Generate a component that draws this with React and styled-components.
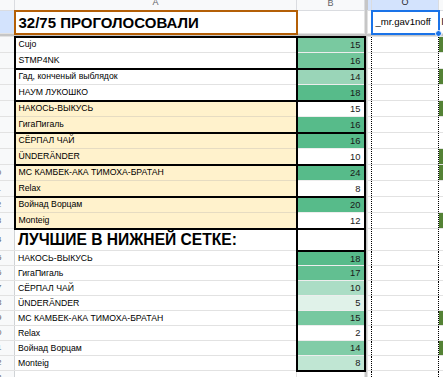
import React from 'react';
import styled, { createGlobalStyle, css } from 'styled-components';

const GlobalStyle = createGlobalStyle`
  html, body {
    margin: 0;
    padding: 0;
    background: #fff;
    overflow: hidden;
  }
  body {
    font-family: "Liberation Sans", Arial, sans-serif;
  }
`;

const GREEN = '#57bb8a';
const YELLOW = '#fff2cc';
const GRID = '#e2e2e2';
const THICK = '2px solid #000';

const Viewport = styled.div`
  width: 443px;
  height: 377px;
  overflow: hidden;
`;

// the sheet is cropped: row numbers and column letters are cut at the edges
const Sheet = styled.table`
  border-collapse: collapse;
  table-layout: fixed;
  width: 519px;
  margin: -5px 0 0 -21px;
  font-family: "Liberation Sans", Arial, sans-serif;
  font-size: 8.7px;
  color: #000;
`;

const Row = styled.tr`
  height: ${p => p.$h}px;
`;

const Cell = styled.td`
  padding: 0;
  border: 1px solid ${GRID};
  white-space: nowrap;
  overflow: hidden;
  line-height: 1;
`;

const ColHead = styled(Cell)`
  background: ${p => (p.$active ? '#d3e3fd' : '#f8f9fa')};
  color: ${p => (p.$active ? '#1f1f1f' : '#5f6368')};
  font-size: 9px;
  text-align: center;
  border-color: #dadce0;
  ${p => p.$active && css`border-left: none;`}
`;

const RowHead = styled(Cell)`
  background: ${p => (p.$active ? '#d3e3fd' : '#f8f9fa')};
  color: #5f6368;
  font-size: 8px;
  text-align: center;
  border-right-color: #d0d3d6;
`;

const FrozenV = styled.td`
  padding: 0;
  border: none;
  background: #c6c6c6;
`;

const FrozenH = styled.td`
  padding: 0;
  border: none;
  background: #c6c6c6;
`;

const TitleCell = styled(Cell)`
  padding: 0 3px;
  font-size: 15px;
  font-weight: 700;
  border: 2px solid #b45f06;
`;

const NameCell = styled(Cell)`
  padding: 0 3px;
  background: ${p => p.$fill || '#fff'};
  font-size: ${p => (p.$heading ? '15.6px' : '8.7px')};
  font-weight: ${p => (p.$heading ? 700 : 400)};
  ${p => p.$fill === YELLOW && css`border-color: #e6dcc2;`}
  ${p => p.$boxed && css`
    border-left: ${THICK};
    border-right: ${THICK};
  `}
  ${p => p.$top && css`border-top: ${THICK};`}
  ${p => p.$bottom && css`border-bottom: ${THICK};`}
`;

const ValueCell = styled(Cell)`
  padding: 0 3px 0 0;
  text-align: right;
  font-size: 9.4px;
  color: #1a1a1a;
  background: ${p => p.$fill || '#fff'};
  border-color: rgba(0, 0, 0, 0.07);
  border-left: ${THICK};
  border-right: ${THICK};
  ${p => p.$top && css`border-top: ${THICK};`}
  ${p => p.$bottom && css`border-bottom: ${THICK};`}
`;

const GapCell = styled(Cell)`
  border-right: none;
`;

const UserCell = styled(Cell)`
  border-left: 1px dotted #000;
  border-right: 1px dotted #000;
`;

const SelectedCell = styled(Cell)`
  position: relative;
  overflow: visible;
  padding: 0 3px;
  font-size: 9.6px;
  border: 2px solid #1a73e8;
`;

const FillHandle = styled.span`
  position: absolute;
  right: -4px;
  bottom: -4px;
  width: 5px;
  height: 5px;
  border-radius: 50%;
  background: #1a73e8;
  border: 1px solid #fff;
  z-index: 2;
`;

const MarkCell = styled(Cell)`
  border-left: none;
  padding: 0 2px;
  font-size: 9.6px;
  background: ${p => (p.$mark ? '#548235' : '#fff')};
`;

const topGroups = [
  {
    fill: '#fff',
    rows: [
      { name: 'Cujo', value: 15, color: '#79c9a0' },
      { name: 'STMP4NK', value: 16, color: '#72c69b' },
    ],
  },
  {
    fill: '#fff',
    rows: [
      { name: 'Гад, конченый выблядок', value: 14, color: '#9ad5b8' },
      { name: 'НАУМ ЛУКОШКО', value: 18, color: GREEN },
    ],
  },
  {
    fill: YELLOW,
    rows: [
      { name: 'НАКОСЬ-ВЫКУСЬ', value: 15, color: '#fff' },
      { name: 'ГигаПигаль', value: 16, color: GREEN },
    ],
  },
  {
    fill: YELLOW,
    rows: [
      { name: 'СЁРПАЛ ЧАЙ', value: 16, color: GREEN },
      { name: 'ÜNDERÄNDER', value: 10, color: '#fff' },
    ],
  },
  {
    fill: YELLOW,
    rows: [
      { name: 'MC КАМБЕК-АКА ТИМОХА-БРАТАН', value: 24, color: GREEN },
      { name: 'Relax', value: 8, color: '#fff' },
    ],
  },
  {
    fill: YELLOW,
    rows: [
      { name: 'Войнад Ворцам', value: 20, color: GREEN },
      { name: 'Monteig', value: 12, color: '#fff' },
    ],
  },
];

const lowerBracket = [
  { name: 'НАКОСЬ-ВЫКУСЬ', value: 18 },
  { name: 'ГигаПигаль', value: 17 },
  { name: 'СЁРПАЛ ЧАЙ', value: 10 },
  { name: 'ÜNDERÄNDER', value: 5 },
  { name: 'MC КАМБЕК-АКА ТИМОХА-БРАТАН', value: 15 },
  { name: 'Relax', value: 2 },
  { name: 'Войнад Ворцам', value: 14 },
  { name: 'Monteig', value: 8 },
];

const markedRows = [2, 4, 6, 9, 10, 13, 19, 21];

// white -> green colour scale, as the sheet's conditional format does
const scale = (v, min, max) => {
  const t = (v - min) / (max - min);
  const mix = (a, b) => Math.round(a + (b - a) * t);
  return `rgb(${mix(255, 87)}, ${mix(255, 187)}, ${mix(255, 138)})`;
};

const RightPane = ({ row }) => (
  <>
    <FrozenV />
    <GapCell />
    <UserCell />
    <MarkCell $mark={markedRows.includes(row)} />
  </>
);

const App = () => {
  let rowNo = 1;
  const upper = topGroups.flatMap(group =>
    group.rows.map((r, ri) => {
      rowNo += 1;
      const n = rowNo;
      return (
        <Row $h={16} key={`u${n}`}>
          <RowHead>{n}</RowHead>
          <NameCell $fill={group.fill} $boxed $top={ri === 0} $bottom={ri === 1}>
            {r.name}
          </NameCell>
          <ValueCell $fill={r.color} $top={ri === 0} $bottom={ri === 1}>
            {r.value}
          </ValueCell>
          <RightPane row={n} />
        </Row>
      );
    })
  );

  const lower = lowerBracket.map((r, i) => {
    const n = 15 + i;
    return (
      <Row $h={15} key={`l${n}`}>
        <RowHead>{n}</RowHead>
        <NameCell>{r.name}</NameCell>
        <ValueCell
          $fill={scale(r.value, 2, 18)}
          $top={i === 0}
          $bottom={i === lowerBracket.length - 1}
        >
          {r.value}
        </ValueCell>
        <RightPane row={n} />
      </Row>
    );
  });

  return (
    <Viewport>
      <GlobalStyle />
      <Sheet>
        <colgroup>
          <col style={{ width: 35 }} />
          <col style={{ width: 282 }} />
          <col style={{ width: 68 }} />
          <col style={{ width: 3 }} />
          <col style={{ width: 4 }} />
          <col style={{ width: 67 }} />
          <col style={{ width: 60 }} />
        </colgroup>
        <tbody>
          <Row $h={15}>
            <ColHead />
            <ColHead>A</ColHead>
            <ColHead>B</ColHead>
            <FrozenV />
            <ColHead $active />
            <ColHead $active>O</ColHead>
            <ColHead>P</ColHead>
          </Row>
          <Row $h={23}>
            <RowHead $active>1</RowHead>
            <TitleCell>32/75 ПРОГОЛОСОВАЛИ</TitleCell>
            <Cell />
            <FrozenV />
            <GapCell />
            <SelectedCell>
              _mr.gav1noff
              <FillHandle />
            </SelectedCell>
            <MarkCell>l</MarkCell>
          </Row>
          <Row $h={3}>
            <FrozenH colSpan={7} />
          </Row>
          {upper}
          <Row $h={22}>
            <RowHead>14</RowHead>
            <NameCell $heading>ЛУЧШИЕ В НИЖНЕЙ СЕТКЕ:</NameCell>
            <ValueCell $top $bottom />
            <RightPane row={14} />
          </Row>
          {lower}
          <Row $h={15}>
            <RowHead>23</RowHead>
            <NameCell />
            <Cell />
            <RightPane row={23} />
          </Row>
        </tbody>
      </Sheet>
    </Viewport>
  );
};

export default App;
